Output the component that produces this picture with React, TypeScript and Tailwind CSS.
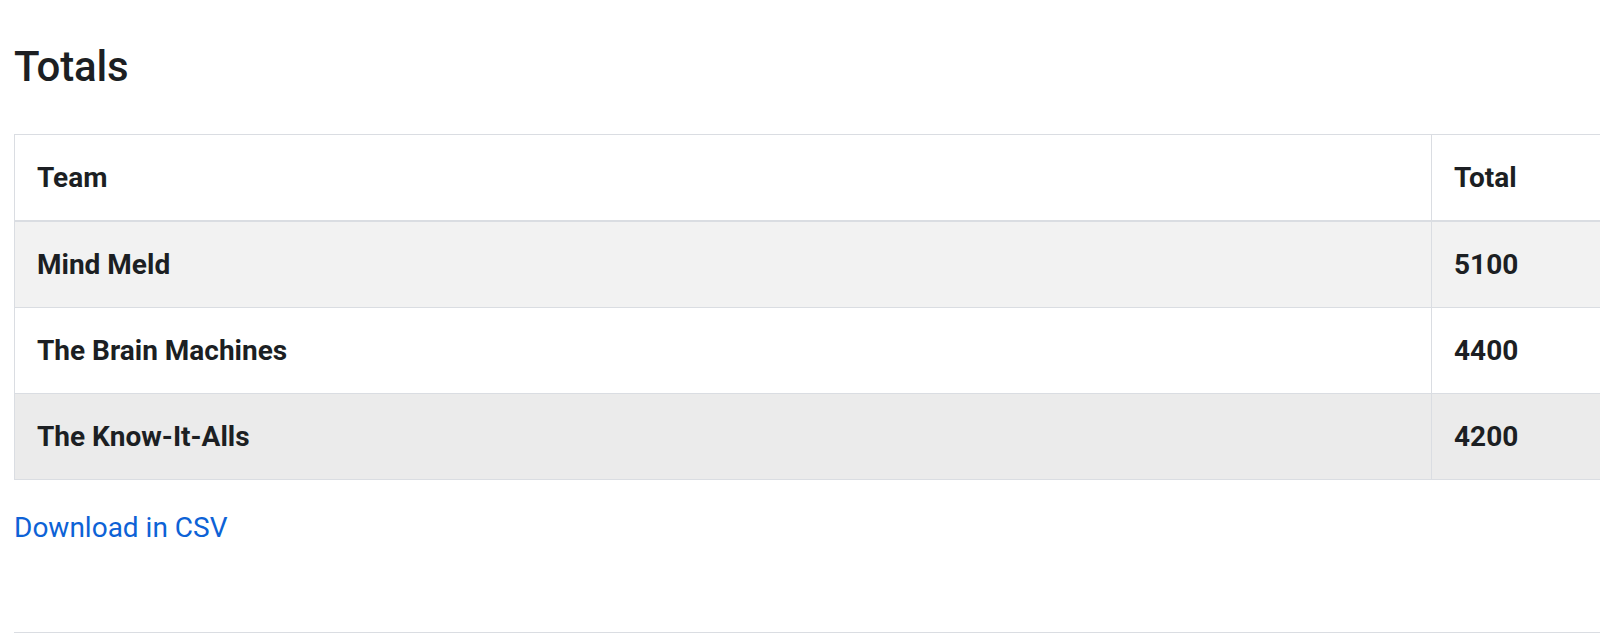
import React from "react";

const ROWS = [
  { team: "Mind Meld", total: 5100, bg: "bg-[#f2f2f2]" },
  { team: "The Brain Machines", total: 4400, bg: "bg-white" },
  { team: "The Know-It-Alls", total: 4200, bg: "bg-[#ebebeb]" },
];

export default function App() {
  return (
    <div className="min-h-[633px] w-[1600px] overflow-hidden bg-white font-['Roboto',sans-serif] text-[#1c1f23]">
      <div className="pl-[14px] w-[1800px]">
        <h2 className="pt-[42px] text-[42px] leading-[1.2] font-medium tracking-[-0.2px]">Totals</h2>

        <table className="mt-[42px] w-[1700px] border-collapse border border-[#dadde2] text-[28px] leading-[42px] font-bold">
          <thead>
            <tr className="bg-white">
              <th className="w-[1417px] border border-b-2 border-[#dadde2] px-[22px] pt-[22px] pb-[21px] text-left font-bold">
                Team
              </th>
              <th className="border border-b-2 border-[#dadde2] px-[22px] pt-[22px] pb-[21px] text-left font-bold">
                Total
              </th>
            </tr>
          </thead>
          <tbody>
            {ROWS.map((row) => (
              <tr key={row.team} className={row.bg}>
                <td className="border border-[#dadde2] px-[22px] pt-[22px] pb-[21px]">{row.team}</td>
                <td className="border border-[#dadde2] px-[22px] pt-[22px] pb-[21px]">{row.total}</td>
              </tr>
            ))}
          </tbody>
        </table>

        <a href="#" className="mt-[27px] block text-[28px] leading-[42px] text-[#0d62d6]">
          Download in CSV
        </a>

        <hr className="mt-[83px] border-t border-[#dadde2]" />
      </div>
    </div>
  );
}
